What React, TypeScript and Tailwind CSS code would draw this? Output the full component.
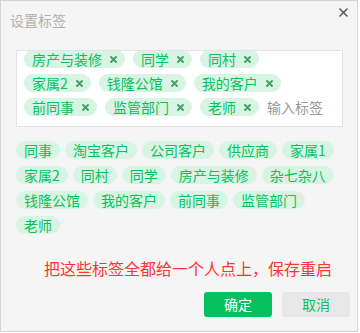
import { useState } from "react";

const selected = ["房产与装修", "同学", "同村", "家属2", "钱隆公馆", "我的客户", "前同事", "监管部门", "老师"];

const allTags = [
  "同事",
  "淘宝客户",
  "公司客户",
  "供应商",
  "家属1",
  "家属2",
  "同村",
  "同学",
  "房产与装修",
  "杂七杂八",
  "钱隆公馆",
  "我的客户",
  "前同事",
  "监管部门",
  "老师",
];

function SmallX() {
  return (
    <svg width="7" height="7" viewBox="0 0 7 7" className="shrink-0">
      <path d="M1 1L6 6M6 1L1 6" stroke="#3f9f60" strokeWidth="1.8" strokeLinecap="round" />
    </svg>
  );
}

export default function App() {
  const [tags, setTags] = useState(selected);

  return (
    <div
      className="relative flex h-[332px] w-[358px] flex-col border border-[#d4d4d4] bg-[#f5f5f5]"
      style={{ fontFamily: '"Noto Sans CJK SC", "Microsoft YaHei", sans-serif' }}
    >
      <div className="pl-[9px] pt-[9px] text-[14px] leading-[20px] text-[#b0b0b0]">设置标签</div>
      <button className="absolute right-[9px] top-[7px] h-[9px] w-[9px]">
        <svg width="9" height="9" viewBox="0 0 9 9">
          <path d="M0.5 0.5L8.5 8.5M8.5 0.5L0.5 8.5" stroke="#4a4a4a" strokeWidth="1.3" />
        </svg>
      </button>

      <div className="ml-[15px] mt-[20px] h-[77px] w-[327px] overflow-hidden border border-[#e3e3e3] bg-white">
        <div className="-mt-[1px] flex flex-wrap gap-x-[8px] gap-y-[6px] pl-[7px] pr-[18px]">
          {tags.map((t) => (
            <span
              key={t}
              className="flex h-[18px] items-center gap-[8px] rounded-full bg-[#d8f5e4] pl-[8px] pr-[8px] text-[14px] leading-[18px] text-[#07c160]"
            >
              {t}
              <span onClick={() => setTags(tags.filter((x) => x !== t))} className="cursor-pointer">
                <SmallX />
              </span>
            </span>
          ))}
          <input
            placeholder="输入标签"
            className="h-[18px] w-[56px] bg-transparent text-[14px] leading-[18px] text-[#333] outline-none placeholder:text-[#999]"
          />
        </div>
      </div>

      <div className="ml-[15px] mt-[14px] flex w-[328px] flex-wrap gap-x-[5px] gap-y-[7px]">
        {allTags.map((t) => (
          <span
            key={t}
            className="h-[18px] rounded-full bg-[#d8f5e4] px-[8px] text-[14px] leading-[18px] text-[#07c160]"
          >
            {t}
          </span>
        ))}
      </div>

      <div className="mt-[22px] pl-[43px] text-[16px] leading-[24px] text-[#ff3333]">
        把这些标签全都给一个人点上，保存重启
      </div>

      <div className="mt-[12px] flex justify-end gap-[10px] pr-[7px]">
        <button className="h-[25px] w-[68px] rounded-[3px] bg-[#07c160] text-[14px] text-white">确定</button>
        <button className="h-[25px] w-[68px] rounded-[3px] bg-[#e8e8e8] text-[14px] text-[#07c160]">取消</button>
      </div>
    </div>
  );
}
